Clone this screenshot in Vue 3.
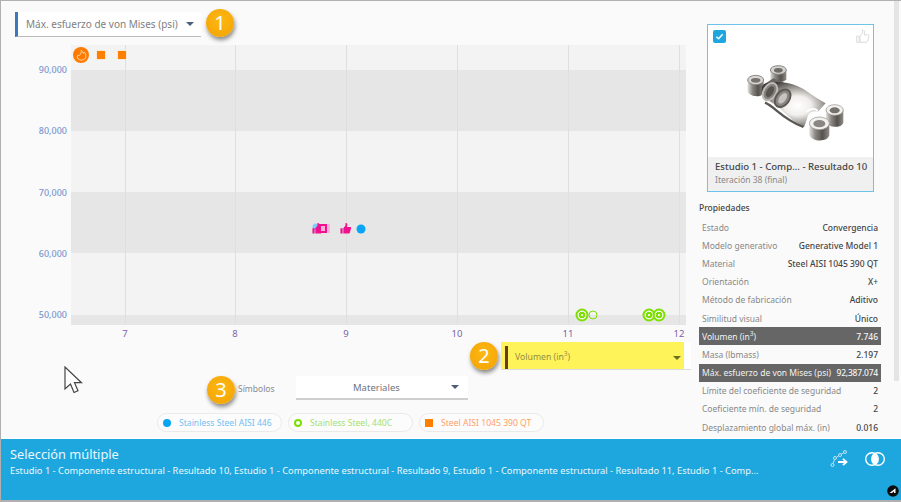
<script setup>
const yTicks = ['90,000', '80,000', '70,000', '60,000', '50,000']
const xTicks = [
  { label: '7', left: 54 },
  { label: '8', left: 164 },
  { label: '9', left: 275 },
  { label: '10', left: 386 },
  { label: '11', left: 497 },
  { label: '12', left: 608 }
]
const bands = [
  { h: 25, dark: false },
  { h: 61, dark: true },
  { h: 61, dark: false },
  { h: 61, dark: true },
  { h: 62, dark: false },
  { h: 10, dark: true }
]
const points = [
  { kind: 'square', x: 30, y: 10 },
  { kind: 'square', x: 51, y: 10 },
  { kind: 'dot', x: 290, y: 184 },
  { kind: 'ring big', x: 511, y: 270 },
  { kind: 'ring small', x: 522, y: 270 },
  { kind: 'ring big', x: 578, y: 270 },
  { kind: 'ring big', x: 588, y: 270 }
]
const props = [
  { k: 'Estado', v: 'Convergencia' },
  { k: 'Modelo generativo', v: 'Generative Model 1' },
  { k: 'Material', v: 'Steel AISI 1045 390 QT' },
  { k: 'Orientación', v: 'X+' },
  { k: 'Método de fabricación', v: 'Aditivo' },
  { k: 'Similitud visual', v: 'Único' },
  { k: 'Volumen (in', sup: '3', tail: ')', v: '7.746', on: true },
  { k: 'Masa (lbmass)', v: '2.197' },
  { k: 'Máx. esfuerzo de von Mises (psi)', v: '92,387.074', on: true, tight: true },
  { k: 'Límite del coeficiente de seguridad', v: '2' },
  { k: 'Coeficiente mín. de seguridad', v: '2' },
  { k: 'Desplazamiento global máx. (in)', v: '0.016' }
]
const chips = [
  { label: 'Stainless Steel AISI 446', mark: 'dot', tone: 'blue' },
  { label: 'Stainless Steel, 440C', mark: 'ring', tone: 'green' },
  { label: 'Steel AISI 1045 390 QT', mark: 'square', tone: 'orange' }
]
const selection = 'Estudio 1 - Componente estructural - Resultado 10, Estudio 1 - Componente estructural - Resultado 9, Estudio 1 - Componente estructural - Resultado 11, Estudio 1 - Comp...'
const thumb = 'M2 8.500h3v7.500H2zM6 8.500 9 5V1.500c1.800-.4 3 .9 2.600 2.600L11 7h4.500c1 0 1.500.9 1.200 1.800l-1.700 6c-.2.700-.8 1.200-1.500 1.200H6z'
const flame = 'M5.500 9.500c.8-1.500 2.500-2.300 3-4.500.3-1.400.1-2.300-.2-3 2 .6 3 2.200 3 4 1-.3 1.600-1 1.800-1.800 1.300 1.500 2 3.300 2 5.200 0 3.300-2.700 6-6 6s-6-2-6-5c0-1.200.9-2.200 2.400-.9z'
</script>

<template>
  <div class="app">
    <div class="content">
      <div class="main">
        <div class="top-row">
          <div class="select metric">
            <span>Máx. esfuerzo de von Mises (psi)</span>
            <i class="caret"></i>
          </div>
          <div class="badge">1</div>
        </div>

        <div class="chart">
          <div class="y-axis">
            <span v-for="t in yTicks" :key="t">{{ t }}</span>
          </div>
          <div class="plot">
            <div v-for="(b, i) in bands" :key="i" class="band" :class="{ dark: b.dark }" :style="{ height: b.h + 'px' }"></div>
            <i v-for="t in xTicks" :key="t.label" class="grid-line" :style="{ left: t.left + 'px' }"></i>
            <i
              v-for="(p, i) in points"
              :key="i"
              class="point"
              :class="p.kind"
              :style="{ left: p.x + 'px', top: p.y + 'px' }"
            ></i>
            <div class="flame">
              <svg width="13" height="13" viewBox="0 0 18 18"><path :d="flame" fill="none" stroke="#ffd9b0" stroke-width="1.300" /></svg>
            </div>
            <i class="point dot behind"></i>
            <svg class="pink" style="left: 240px" width="13" height="13" viewBox="0 0 18 18"><path :d="thumb" fill="#f0118f" /></svg>
            <svg class="pink" style="left: 268px" width="13" height="13" viewBox="0 0 18 18"><path :d="thumb" fill="#f0118f" /></svg>
            <i class="pink-box"></i>
          </div>
        </div>

        <div class="x-axis">
          <span v-for="t in xTicks" :key="t.label" :style="{ left: t.left + 'px' }">{{ t.label }}</span>
        </div>

        <div class="volume-row">
          <div class="badge">2</div>
          <div class="volume">
            <div class="volume-fill">
              <span>Volumen (in<sup>3</sup>)</span>
              <i class="caret olive"></i>
            </div>
          </div>
        </div>

        <div class="symbols-row">
          <svg class="cursor" width="19" height="29" viewBox="0 0 19 29">
            <path d="M1 1v22l5.500-5 3.500 8.500 4-1.800-3.500-8h7z" fill="#fff" stroke="#444" stroke-width="1.200" />
          </svg>
          <div class="badge">3</div>
          <span class="symbols-label">Símbolos</span>
          <div class="select symbols">
            <span>Materiales</span>
            <i class="caret"></i>
          </div>
        </div>

        <div class="chips">
          <div v-for="c in chips" :key="c.label" class="chip" :class="c.tone">
            <i :class="c.mark"></i>
            <span>{{ c.label }}</span>
          </div>
        </div>
      </div>

      <aside class="side">
        <div class="card">
          <div class="card-image">
            <span class="check">
              <svg width="9" height="9" viewBox="0 0 10 10"><path d="M1.500 5.200 4 7.500 8.500 2.500" fill="none" stroke="#fff" stroke-width="1.600" /></svg>
            </span>
            <svg class="like" width="15" height="15" viewBox="0 0 18 18"><path :d="thumb" fill="none" stroke="#d8d8d8" stroke-width="1.100" /></svg>
            <svg class="model" width="165" height="132" viewBox="-96 -105 495 396">
              <defs>
                <radialGradient id="metal" cx="0.560" cy="0.520" r="0.600">
                  <stop offset="0" stop-color="#ffffff" />
                  <stop offset="0.350" stop-color="#f1efec" />
                  <stop offset="0.650" stop-color="#a19e99" />
                  <stop offset="1" stop-color="#3d3b38" />
                </radialGradient>
                <linearGradient id="tube" x1="0" y1="0" x2="1" y2="0">
                  <stop offset="0" stop-color="#e2e0dc" />
                  <stop offset="0.300" stop-color="#8b8884" />
                  <stop offset="0.650" stop-color="#55524e" />
                  <stop offset="1" stop-color="#8f8c87" />
                </linearGradient>
              </defs>
              <path d="M91 30v28c6 12 42 12 48 0V30z" fill="url(#tube)" />
              <ellipse cx="115" cy="30" rx="24" ry="13" fill="#d4d2ce" stroke="#8a8783" stroke-width="3" />
              <ellipse cx="115" cy="31" rx="13" ry="7" fill="#6e6b67" />
              <path d="M23 60v34c6 18 42 20 48 4V60z" fill="url(#tube)" />
              <ellipse cx="47" cy="60" rx="24" ry="14" fill="#d9d7d3" stroke="#8a8783" stroke-width="3" />
              <ellipse cx="47" cy="61" rx="14" ry="7" fill="#77746f" />
              <path d="M62 80 100 55l35 15-30 60z" fill="#6a6763" />
              <path d="M72 72c30-10 70-6 100 6 25 10 45 30 85 52l-22 24c-14-2-30 0-34 22l-9 26c-40-20-60-50-90-70-25-15-50-30-30-60z" fill="url(#metal)" />
              <path d="M75 128c30 12 50 48 115 73" fill="none" stroke="#5a5854" stroke-width="7" />
              <path d="M200 155c10-8 20-12 33-3" fill="none" stroke="#fff" stroke-width="6" />
              <ellipse cx="90" cy="95" rx="19" ry="28" fill="#85827e" stroke="#bdbbb7" stroke-width="6" transform="rotate(32 90 95)" />
              <ellipse cx="90" cy="95" rx="10" ry="18" fill="#57544f" transform="rotate(32 90 95)" />
              <ellipse cx="128" cy="115" rx="20" ry="29" fill="#8a8783" stroke="#5d5a56" stroke-width="6" transform="rotate(36 128 115)" />
              <ellipse cx="128" cy="115" rx="10" ry="18" fill="#c6c4c0" transform="rotate(36 128 115)" />
              <path d="M258 150v36c6 18 46 20 52 2v-38z" fill="url(#tube)" />
              <ellipse cx="284" cy="150" rx="26" ry="16" fill="#f2f1ee" stroke="#8f8c88" stroke-width="2" />
              <ellipse cx="284" cy="151" rx="15" ry="9" fill="#75726e" />
              <path d="M208 190v34c6 22 54 24 60 2v-36z" fill="url(#tube)" />
              <ellipse cx="238" cy="190" rx="30" ry="19" fill="#f2f1ee" stroke="#8f8c88" stroke-width="2" />
              <ellipse cx="238" cy="191" rx="18" ry="11" fill="#8a8783" />
            </svg>
          </div>
          <div class="card-caption">
            <strong>Estudio 1 - Comp... - Resultado 10</strong>
            <span>Iteración 38 (final)</span>
          </div>
        </div>

        <h3>Propiedades</h3>
        <div class="props">
          <div v-for="p in props" :key="p.k" class="prop" :class="{ on: p.on }">
            <span class="prop-key">{{ p.k }}<sup v-if="p.sup">{{ p.sup }}</sup>{{ p.tail }}</span>
            <span class="prop-val" :class="{ tight: p.tight }">{{ p.v }}</span>
          </div>
        </div>
      </aside>

      <div class="scrollbar"></div>
    </div>

    <footer class="footer">
      <div class="footer-text">
        <div class="footer-title">Selección múltiple</div>
        <div class="footer-sub">{{ selection }}</div>
      </div>
      <div class="footer-icons">
        <svg width="20" height="18" viewBox="0 0 20 18">
          <g fill="none" stroke="#bfe6f7" stroke-width="1">
            <circle cx="2.500" cy="15" r="1.500" />
            <circle cx="5" cy="8" r="1.500" />
            <circle cx="10" cy="5" r="1.500" />
            <circle cx="15" cy="2" r="1.500" />
            <path d="M3 13.500 4.500 9.500M6.500 7.200 8.700 5.800M11.300 4.200 13.700 2.800" />
          </g>
          <path d="M8 12h8M13 8.800 16.500 12 13 15.200" fill="none" stroke="#fff" stroke-width="1.800" />
        </svg>
        <svg width="20" height="16" viewBox="0 0 20 16">
          <circle cx="7" cy="8" r="6.300" fill="none" stroke="#fff" stroke-width="1.400" />
          <circle cx="13" cy="8" r="6.300" fill="none" stroke="#fff" stroke-width="1.400" />
          <path d="M10 2.600a6.300 6.300 0 0 1 0 10.800 6.300 6.300 0 0 1 0-10.800z" fill="#fff" />
        </svg>
      </div>
      <svg class="corner" width="12" height="12" viewBox="0 0 12 12">
        <circle cx="6" cy="6" r="5.800" fill="#0c0c0c" />
        <path d="M2.500 8 8.500 3.200V8H7V6.300L5 8z" fill="#fff" />
      </svg>
    </footer>
  </div>
</template>

<style scoped>
.app {
  width: 901px;
  height: 502px;
  box-sizing: border-box;
  border: 1px solid #b0b0b0;
  border-bottom-width: 2px;
  border-right: 0;
  background: #fafafa;
  display: flex;
  flex-direction: column;
  overflow: hidden;
  font-family: "Noto Sans", "Open Sans", sans-serif;
  font-size: 9.500px;
  color: #555;
}
.content {
  flex: 1;
  min-height: 0;
  display: flex;
}
.main {
  width: 686px;
  flex: none;
}
.top-row {
  height: 44px;
  padding: 11px 0 0 14px;
  box-sizing: border-box;
  display: flex;
  align-items: flex-start;
  gap: 5px;
}
.select {
  background: #fff;
  border-bottom: 1px solid #bbb;
  display: flex;
  align-items: center;
  box-sizing: border-box;
  color: #808080;
  font-size: 10px;
}
.metric {
  width: 186px;
  height: 25px;
  border-left: 3px solid #3b78c0;
  padding: 0 7px 0 8px;
  justify-content: space-between;
}
.caret {
  width: 0;
  height: 0;
  border: 4px solid transparent;
  border-top: 4px solid #4d5f78;
  border-bottom: 0;
}
.caret.olive {
  border-top-color: #6d6d20;
}
.badge {
  width: 28px;
  height: 28px;
  flex: none;
  border-radius: 50%;
  background: radial-gradient(circle at 50% 40%, #fdb812, #f2a205);
  box-shadow: 1px 3px 4px rgba(0, 0, 0, 0.450);
  color: #fff;
  font-size: 20px;
  line-height: 28px;
  text-align: center;
  margin-top: -3px;
}
.chart {
  display: flex;
  height: 280px;
}
.y-axis {
  width: 70px;
  flex: none;
  padding: 18px 4px 0 0;
  box-sizing: border-box;
  display: flex;
  flex-direction: column;
  gap: 47.250px;
  align-items: flex-end;
  color: #7b97cf;
  font-size: 9px;
  font-weight: 500;
  line-height: 14px;
}
.plot {
  width: 615px;
  height: 280px;
  position: relative;
  background: #f3f3f3;
  overflow: hidden;
}
.band {
  background: #f3f3f3;
}
.band.dark {
  background: #e6e6e6;
}
.grid-line {
  position: absolute;
  top: 0;
  bottom: 0;
  width: 1px;
  background: #dfdfdf;
}
.point {
  position: absolute;
  box-sizing: border-box;
  transform: translate(-50%, -50%);
}
.point.square {
  width: 10px;
  height: 10px;
  background: #ff7f00;
  border: 1px solid #fbe9d6;
}
.point.dot {
  width: 9px;
  height: 9px;
  border-radius: 50%;
  background: #08a5f5;
}
.point.dot.behind {
  left: 245px;
  top: 182px;
  width: 7px;
  height: 7px;
  background: #7fd0f8;
}
.point.ring {
  border-radius: 50%;
  border: 2px solid #7de000;
}
.point.ring.big {
  width: 13px;
  height: 13px;
  background: radial-gradient(circle closest-side, #eef5e4 0 1.500px, #7de000 1.500px 3px, #eef5e4 3px);
}
.point.ring.small {
  width: 9px;
  height: 9px;
  border-width: 1.500px;
}
.flame {
  position: absolute;
  left: 2px;
  top: 2px;
  width: 16px;
  height: 16px;
  border-radius: 50%;
  background: #ff7a00;
  display: flex;
  align-items: center;
  justify-content: center;
}
.pink {
  position: absolute;
  top: 177px;
}
.pink-box {
  position: absolute;
  left: 248px;
  top: 179px;
  width: 8px;
  height: 9px;
  box-sizing: border-box;
  background: #fbb0d8;
  border: 2px solid #f0118f;
  box-shadow: 3px 0 0 #f9b5da;
}
.x-axis {
  position: relative;
  height: 17px;
  margin-left: 70px;
  color: #7b62a8;
  font-size: 9.500px;
  line-height: 18px;
}
.x-axis span {
  position: absolute;
  transform: translateX(-50%);
}
.volume-row {
  display: flex;
  justify-content: flex-end;
  align-items: flex-start;
  height: 31px;
  margin-right: -4px;
}
.volume-row .badge {
  margin: 0 3px 0 0;
}
.volume {
  width: 190px;
  height: 28px;
  background: #fff;
  border-bottom: 1px solid #ddd;
  box-sizing: border-box;
}
.volume-fill {
  width: 183px;
  height: 27px;
  background: #fff35a;
  padding: 4px 3px 0 4px;
  box-sizing: border-box;
  display: flex;
  align-items: center;
  justify-content: space-between;
  color: #938d45;
  font-size: 8.700px;
}
.volume-fill span {
  border-left: 3px solid #6b3a1e;
  height: 23px;
  line-height: 23px;
  padding-left: 7px;
}
sup {
  font-size: 6.500px;
  line-height: 0;
}
.symbols-row {
  position: relative;
  height: 40px;
  display: flex;
  align-items: flex-start;
  padding: 3px 0 0 206px;
  box-sizing: border-box;
}
.symbols-row .badge {
  margin: 0 3px 0 0;
}
.cursor {
  position: absolute;
  left: 63px;
  top: -7px;
}
.symbols-label {
  width: 58px;
  margin-top: 7px;
  color: #8a8a8a;
  font-size: 8.500px;
}
.symbols {
  width: 172px;
  height: 24px;
  border-bottom: 2px solid #cfcfcf;
  padding: 0 9px 0 57px;
  justify-content: space-between;
  font-size: 9.500px;
  color: #6f7480;
}
.chips {
  display: flex;
  gap: 6px;
  padding: 0 0 0 156px;
}
.chip {
  width: 125px;
  height: 19px;
  box-sizing: border-box;
  border: 1px solid #eaeaea;
  border-radius: 10px;
  background: #fcfcfc;
  display: flex;
  align-items: center;
  gap: 8px;
  padding-left: 5px;
  font-size: 8.600px;
  white-space: nowrap;
}
.chip.blue { color: #74bdf2; }
.chip.green { color: #a5e070; }
.chip.orange { color: #ff9f68; }
.chip i {
  flex: none;
  box-sizing: border-box;
  width: 8px;
  height: 8px;
}
.chip .dot {
  border-radius: 50%;
  background: #08a5f5;
}
.chip .ring {
  border-radius: 50%;
  border: 2px solid #7ae000;
}
.chip .square {
  background: #ff7f00;
}
.side {
  width: 197px;
  flex: none;
  padding: 23px 0 0 12px;
  box-sizing: border-box;
  overflow: hidden;
}
.card {
  width: 167px;
  height: 168px;
  margin-left: 8px;
  border: 1px solid #6fc3e8;
  box-sizing: border-box;
  background: #fff;
  display: flex;
  flex-direction: column;
}
.card-image {
  position: relative;
  flex: 1;
}
.check {
  position: absolute;
  left: 5px;
  top: 5px;
  width: 13px;
  height: 13px;
  border-radius: 2px;
  background: #1ea7de;
  display: flex;
  align-items: center;
  justify-content: center;
}
.like {
  position: absolute;
  right: 3px;
  top: 4px;
}
.model {
  display: block;
}
.card-caption {
  height: 34px;
  background: #f0f0f0;
  padding: 3px 0 0 7px;
  box-sizing: border-box;
  display: flex;
  flex-direction: column;
  line-height: 13px;
  white-space: nowrap;
}
.card-caption strong {
  color: #444;
  font-size: 9.600px;
  font-weight: 500;
}
.card-caption span {
  color: #888;
  font-size: 8.500px;
}
h3 {
  margin: 10px 0 4px;
  font-size: 8.500px;
  line-height: 12px;
  font-weight: 500;
  color: #444;
}
.prop {
  width: 182px;
  height: 18.200px;
  padding: 0 3px;
  box-sizing: border-box;
  display: flex;
  justify-content: space-between;
  align-items: center;
  white-space: nowrap;
  font-size: 8.500px;
}
.prop-key {
  color: #888;
}
.prop-val {
  color: #444;
  font-weight: 500;
}
.prop-val.tight {
  letter-spacing: -0.200px;
}
.prop.on {
  background: #666;
}
.prop.on .prop-key,
.prop.on .prop-val {
  color: #f2f2f2;
}
.scrollbar {
  width: 5px;
  height: 380px;
  margin: 0 0 0 10px;
  background: #e4e4e4;
  flex: none;
}
.footer {
  position: relative;
  height: 62px;
  flex: none;
  border-top: 1px solid #fff;
  background: #1ea7de;
  display: flex;
  justify-content: space-between;
  padding: 5px 16px 0 9px;
  box-sizing: border-box;
  color: #eaf7fd;
}
.footer-text {
  width: 760px;
}
.footer-title {
  font-size: 12.800px;
  line-height: 20px;
}
.footer-sub {
  font-size: 9.300px;
  line-height: 13px;
  white-space: nowrap;
}
.footer-icons {
  display: flex;
  align-items: center;
  gap: 15px;
  height: 30px;
}
.corner {
  position: absolute;
  right: 2px;
  bottom: 3px;
}
</style>
